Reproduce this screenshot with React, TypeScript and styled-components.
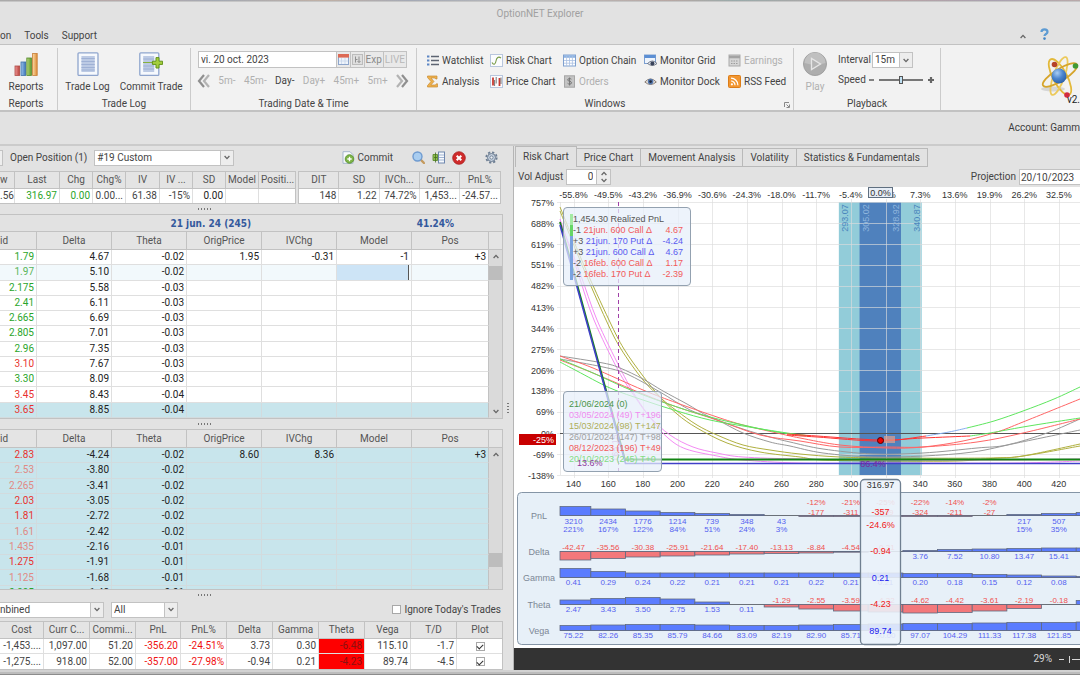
import React from "react";
import styled, { createGlobalStyle, css } from "styled-components";

const c = {
  face: "#e2e2e2",
  ribbon: "#f2f2f2",
  line: "#c2c2c2",
  cell: "#dfdfdf",
  text: "#444",
  off: "#b0b0b0",
  dark: "#222",
  green: "#2aa52a",
  red: "#e8322e",
  softRed: "#e08a84",
  blueRow: "#c8e5ec",
};

const Global = createGlobalStyle`
  * { box-sizing: border-box; }
  body {
    margin: 0;
    background: ${c.face};
    color: ${c.text};
    font: 10px/14px Roboto, "Noto Sans", sans-serif;
    overflow-x: hidden;
  }
  button, input, select { font: inherit; color: inherit; margin: 0; }
  button { background: none; border: 0; padding: 0; }
`;

const Shell = styled.div`
  display: flex;
  flex-direction: column;
  overflow: hidden;
`;
const Backdrop = styled.div`
  height: 2px;
  border-bottom: 1px solid #c6c6c6;
  background: linear-gradient(90deg, #aaa, #b9a9a9 12%, #a3a9b3 20%, #c0b0a5 30%, #a4a9b5 38%, #bbb 50%, #b7a7a3 62%, #9aa 68%, #b9a4a4 82%, #a9a1b0 92%, #b9a9a9);
`;
const TitleBar = styled.header`
  padding: 5px 0 7px;
  text-align: center;
  color: #a0a0a0;
`;
const MenuBar = styled.nav`
  display: flex;
  align-items: center;
  gap: 13px;
  height: 15px;
  margin-bottom: 1px;
`;
const MenuEnd = styled.div`
  display: flex;
  align-items: center;
  gap: 14px;
  margin-left: auto;
  padding-right: 31px;
`;

/* Ribbon */
const Ribbon = styled.section`
  display: flex;
  height: 68px;
  padding-top: 3px;
  background: ${c.ribbon};
  border-top: 1px solid ${c.line};
  border-bottom: 2px solid ${c.line};
`;
const Group = styled.div<{ $w: number; $shift?: number }>`
  position: relative;
  flex: 0 0 ${(p) => p.$w}px;
  min-width: 0;
  display: flex;
  flex-direction: column;
  padding-right: ${(p) => p.$shift ?? 0}px;
  border-right: 1px solid #cbcbcb;
`;
const Caption = styled.div`
  margin-top: auto;
  text-align: center;
  line-height: 12px;
`;
const BigButtons = styled.div`
  display: flex;
  justify-content: center;
  gap: 10px;
`;
const BigButton = styled.button`
  display: flex;
  flex-direction: column;
  align-items: center;
  gap: 4px;
  padding-top: 4px;
  white-space: nowrap;
  &:disabled { color: ${c.off}; }
`;
const DateField = styled.div`
  display: flex;
  height: 17px;
  margin: 3px 9px 0 7px;
  border: 1px solid ${c.line};
  input { flex: 1; min-width: 0; border: 0; padding: 0 2px; background: #fff; }
`;
const DateButton = styled.button`
  display: grid;
  place-items: center;
  min-width: 13px;
  padding: 0 1px;
  border-left: 1px solid ${c.line};
  background: #e9e9e9;
  color: #8a8a8a;
  &:disabled { color: #b8b8b8; }
`;
const Steps = styled.div`
  display: flex;
  align-items: center;
  justify-content: space-between;
  margin: 6px 7px 0 6px;
  height: 14px;
`;
const Step = styled.button`
  display: flex;
  &:disabled { color: ${c.off}; }
`;
const Commands = styled.div`
  display: grid;
  grid-template-columns: 64px 73px 81px 84px 1fr;
  grid-template-rows: 21px 21px;
  padding: 2px 0 0 9px;
`;
const Command = styled.button`
  display: flex;
  align-items: center;
  gap: 3px;
  white-space: nowrap;
  svg { flex: none; }
  &:disabled { color: ${c.off}; }
`;
const Launcher = styled.button`
  position: absolute;
  right: 3px;
  bottom: 2px;
  display: flex;
`;
const Playback = styled.div`
  display: flex;
  gap: 11px;
  padding-left: 9px;
`;
const PlayOptions = styled.div`
  display: flex;
  flex-direction: column;
  gap: 4px;
  padding-top: 4px;
`;
const Field = styled.label`
  display: flex;
  align-items: center;
  gap: 1px;
  height: 16px;
`;
const SpeedRange = styled.input`
  appearance: none;
  width: 44px;
  height: 8px;
  margin: 0 3px;
  background: linear-gradient(#777, #777) center / 100% 2px no-repeat;
  &::-webkit-slider-thumb {
    appearance: none;
    width: 4px;
    height: 8px;
    border: 1px solid #555;
    background: #bfe0f2;
  }
`;
const Brand = styled.div`
  position: relative;
  flex: 1;
  display: flex;
  justify-content: flex-end;
  padding-top: 7px;
  overflow: hidden;
  span { position: absolute; right: 0; bottom: 3px; color: #222; }
`;
const AccountBar = styled.div`
  display: flex;
  justify-content: flex-end;
  align-items: center;
  height: 32px;
  color: #3c3c3c;
`;

/* Panes */
const Workspace = styled.main`
  display: grid;
  grid-template-columns: 47.5% minmax(0, 1fr);
  border-top: 2px solid #cbcbcb;
`;
const LeftPane = styled.section`
  display: grid;
  grid-template-columns: minmax(0, 1fr) 10px;
`;
const LeftStack = styled.div`
  display: flex;
  flex-direction: column;
  min-width: 0;
`;
const GripRow = styled.div<{ $vertical?: boolean }>`
  display: grid;
  place-items: center;
  ${(p) => (p.$vertical ? "" : "height: 10px; margin-right: 94px;")}
  &::after {
    content: "";
    ${(p) =>
      p.$vertical
        ? css`width: 2px; height: 10px; background: repeating-linear-gradient(#777 0 1px, transparent 1px 3px);`
        : css`width: 13px; height: 2px; background: repeating-linear-gradient(90deg, #777 0 1px, transparent 1px 3px);`}
  }
`;
const Toolbar = styled.div<{ $h: number }>`
  display: flex;
  align-items: center;
  height: ${(p) => p.$h}px;
  gap: 7px;
  padding: 0 5px 2px 0;
`;
const Spring = styled.div`
  flex: 1;
`;
const IconButton = styled.button<{ $gap?: number }>`
  display: flex;
  align-items: center;
  gap: 3px;
  margin-left: ${(p) => p.$gap ?? 0}px;
`;
const ComboEdge = styled.div`
  width: 3px;
  height: 16px;
  border: 1px solid ${c.line};
  border-left: 0;
  background: #eee;
`;
const SelectBox = styled.span<{ $w: number; $open?: boolean }>`
  display: flex;
  flex: none;
  width: ${(p) => p.$w}px;
  height: 16px;
  border: 1px solid ${c.line};
  ${(p) => p.$open && "border-left: 0;"}
  background: #fff;
  select {
    flex: 1;
    min-width: 0;
    appearance: none;
    border: 0;
    padding: 0 ${(p) => (p.$open ? 0 : 2)}px;
    background: #fff;
    line-height: 14px;
  }
  span {
    display: grid;
    place-items: center;
    width: 13px;
    border-left: 1px solid ${c.line};
    background: #ededed;
    pointer-events: none;
  }
`;

/* Tables */
const Table = styled.table`
  width: 100%;
  table-layout: fixed;
  border-collapse: separate;
  border-spacing: 0;
  color: ${c.dark};
  th {
    height: 17px;
    padding: 0 2px;
    font-weight: 400;
    line-height: 14px;
    color: #555;
    background: #e4e4e4;
    border-right: 1px solid ${c.line};
    border-bottom: 1px solid ${c.line};
    white-space: nowrap;
    overflow: hidden;
  }
  td {
    height: 15px;
    padding: 0 2px;
    text-align: right;
    line-height: 14px;
    white-space: nowrap;
    overflow: hidden;
    background: #fff;
    border-right: 1px solid ${c.cell};
    border-bottom: 1px solid ${c.cell};
  }
  tr > :last-child { border-right: 0; }
`;
const Frame = styled.div<{ $open?: boolean; $grow?: number }>`
  ${(p) => p.$grow && `flex: ${p.$grow} 1 0;`}
  min-width: 0;
  border: 1px solid ${c.line};
  ${(p) => p.$open && "border-left: 0;"}
  overflow: hidden;
`;
const SummaryRow = styled.div`
  display: flex;
  gap: 2px;
  padding-right: 2px;
  tbody tr:last-child td { border-bottom: 0; height: 14px; }
`;
const Cell = styled.td<{ $color?: string; $bg?: string; $tight?: boolean }>`
  && {
    ${(p) => p.$color && `color: ${p.$color};`}
    ${(p) => p.$bg && `background: ${p.$bg};`}
    ${(p) => p.$tight && "padding: 0;"}
  }
`;
const EdgeHead = styled.th`
  && { padding: 0; text-align: left; }
`;
const ChainTitle = styled.h2`
  display: flex;
  margin: 0;
  height: 17px;
  border-bottom: 1px solid ${c.line};
  font: 700 10px/18px "DejaVu Sans Condensed", "DejaVu Sans", sans-serif;
  color: #34599d;
  span { flex: 0 0 83%; padding-left: 5px; text-align: center; }
`;
const ChainBody = styled.div<{ $h: number }>`
  display: grid;
  grid-template-columns: minmax(0, 1fr) 13px;
  height: ${(p) => p.$h}px;
  overflow: hidden;
`;
const ChainTable = styled(Table)<{ $fill: number; $tinted?: boolean }>`
  height: ${(p) => p.$fill}px;
  th { height: 18px; }
  td { background: ${(p) => (p.$tinted ? c.blueRow : "#fff")}; border-color: ${(p) => (p.$tinted ? "#d2dbde" : c.cell)}; }
  tr > :last-child { border-right: 1px solid ${c.line}; }
`;
const ChainRow = styled.tr<{ $state?: "selected" | "tinted" }>`
  ${(p) => p.$state === "selected" && css`td { background: #f2f9fc; }`}
  ${(p) => p.$state === "tinted" && css`td { background: ${c.blueRow}; border-color: #d2dbde; }`}
`;
const EditCell = styled.td`
  && { background: #cde4f6; box-shadow: inset -2px 0 0 #f2f9fc, inset -3px 0 0 #555; }
`;
const ScrollColumn = styled.div`
  display: flex;
  flex-direction: column;
  align-items: stretch;
  min-height: 0;
  background: #dadada;
  svg { margin: 4px auto; flex: none; }
`;
const ScrollHead = styled.div`
  flex: 0 0 18px;
  background: #e4e4e4;
  border-bottom: 1px solid ${c.line};
`;
const Track = styled.div<{ $grow: number }>`
  flex: ${(p) => p.$grow} 1 0;
`;
const Thumb = styled.div`
  flex: 0 0 14px;
  background: #bdbdbd;
`;
const CheckLabel = styled.label`
  display: flex;
  align-items: center;
  gap: 3px;
  margin-right: -3px;
`;
const Check = styled.input`
  appearance: none;
  width: 9px;
  height: 9px;
  border: 1px solid #a8a8a8;
  background: #fff;
  display: inline-grid;
  place-items: center;
  vertical-align: middle;
  &:checked::after {
    content: "";
    width: 5px;
    height: 3px;
    border: solid #333;
    border-width: 0 0 1px 1px;
    transform: rotate(-45deg);
  }
`;
const PositionTable = styled(Table)`
  td { color: #444; }
  td:last-child { text-align: center; line-height: 10px; }
  tbody tr:last-child td { border-bottom: 0; }
`;

/* Chart pane */
const ChartPane = styled.section`
  display: flex;
  flex-direction: column;
  min-width: 0;
  border-left: 1px solid #b5b5b5;
  overflow: hidden;
`;
const Tabs = styled.div`
  display: flex;
  align-items: flex-end;
  height: 21px;
  padding-left: 1px;
`;
const Tab = styled.button<{ $active?: boolean }>`
  height: ${(p) => (p.$active ? 21 : 19)}px;
  padding: 0 7px;
  border: 1px solid #b9b9b9;
  border-left-width: ${(p) => (p.$active ? 1 : 0)}px;
  border-bottom-width: ${(p) => (p.$active ? 0 : 1)}px;
  white-space: nowrap;
`;
const ChartOptions = styled.div`
  display: flex;
  align-items: center;
  height: 20px;
  padding-left: 4px;
`;
const Spinner = styled.span`
  display: flex;
  width: 45px;
  height: 16px;
  margin-left: 3px;
  border: 1px solid ${c.line};
  background: #fff;
  input { flex: 1; min-width: 0; border: 0; padding: 0 3px; text-align: right; background: #fff; }
  span { display: grid; place-items: center; width: 14px; border-left: 1px solid ${c.line}; background: #ededed; }
`;
const Projection = styled.input`
  width: 61px;
  height: 16px;
  margin-left: 3px;
  padding: 0 1px;
  border: 1px solid ${c.line};
  border-right: 0;
  background: #fff;
`;
const chartFont = `"Liberation Sans", Arial, sans-serif`;
const ChartArea = styled.div`
  position: relative;
  height: 461px;
  background: #fff;
  overflow: hidden;
  svg { display: block; }
`;
const LegendBox = styled.ul<{ $top: number; $w: number; $pad: string }>`
  position: absolute;
  top: ${(p) => p.$top}px;
  left: 49px;
  width: ${(p) => p.$w}px;
  margin: 0;
  padding: ${(p) => p.$pad};
  list-style: none;
  font: 9px/11px ${chartFont};
  background: rgba(230, 238, 249, 0.72);
  border: 1px solid #93a1b0;
  border-radius: 4px;
`;
const LegendRow = styled.li<{ $color: string; $bar?: string }>`
  display: flex;
  color: ${(p) => p.$color};
  white-space: pre;
  ${(p) => p.$bar && `border-left: 3px solid ${p.$bar};`}
  b { font-weight: 400; color: #555; }
  i { font-style: normal; margin-left: auto; padding-right: 1px; }
`;
const ProbabilityMark = styled.span`
  position: absolute;
  top: 271px;
  left: 63px;
  font: 9px/11px ${chartFont};
  color: #8f3a9a;
`;
const StatusBar = styled.footer`
  flex: 1;
  display: flex;
  align-items: center;
  justify-content: flex-end;
  gap: 7px;
  min-height: 21px;
  background: #333;
  color: #d8d8d8;
`;
const WindowEdge = styled.div`
  height: 5px;
  border-top: 2px solid #d2d2d2;
  border-bottom: 1px solid #8c8c8c;
  background: #bcbcbc;
`;

/* Icons */
const Chevron = ({ up = false }: { up?: boolean }) => (
  <svg width="6" height="5" viewBox="0 0 6 5" fill="none" stroke="#666" strokeWidth="1.3">
    <path d={up ? "M.6 4L3 1.4 5.4 4" : "M.6 1L3 3.6 5.4 1"} />
  </svg>
);
const ReportsIcon = () => (
  <svg width="24" height="24" viewBox="0 0 24 24">
    <defs>
      <linearGradient id="rr"><stop stopColor="#e99" /><stop offset="1" stopColor="#b9413a" /></linearGradient>
      <linearGradient id="rb"><stop stopColor="#9cc4ec" /><stop offset="1" stopColor="#3d76b8" /></linearGradient>
      <linearGradient id="rg"><stop stopColor="#b5d67c" /><stop offset="1" stopColor="#5f9a2c" /></linearGradient>
      <linearGradient id="ro"><stop stopColor="#fbd9a4" /><stop offset="1" stopColor="#dd8b35" /></linearGradient>
    </defs>
    <rect x="1" y="14" width="4.6" height="9.4" fill="url(#rr)" stroke="#ae4a45" strokeWidth=".8" />
    <rect x="7" y="10" width="4.6" height="13.4" fill="url(#rb)" stroke="#3c6fa8" strokeWidth=".8" />
    <rect x="12.8" y="6" width="4.6" height="17.4" fill="url(#rg)" stroke="#54882b" strokeWidth=".8" />
    <rect x="18.6" y="1.5" width="4.6" height="21.9" fill="url(#ro)" stroke="#c67d35" strokeWidth=".8" />
  </svg>
);
const LogIcon = ({ plus = false }: { plus?: boolean }) => (
  <svg width="24" height="24" viewBox="0 0 24 24">
    <rect x={plus ? 0.8 : 2} y=".8" width={plus ? 19 : 20} height="22.6" rx="1" fill="#f6f9fd" stroke="#8fa5cd" strokeWidth="1.3" />
    <rect x={plus ? 4.2 : 5.4} y="4" width={plus ? 11 : 13.4} height="16" fill="#bccae4" />
    <path d={plus ? "M4.2 7h11M4.2 14h11M4.2 17h11" : "M5.4 6.5h13.4M5.4 9.5h13.4M5.4 12.5h13.4M5.4 15.5h13.4M5.4 18h13.4"} stroke="#98abd0" strokeWidth=".8" />
    {plus && (
      <>
        <path d="M4 10.5h10" stroke="#86b13d" strokeWidth="1" />
        <path d="M17 5.6h3v3.6h3.6v3.2H20V16h-3v-3.6h-3.6V9.200H17z" fill="#a4cf3d" stroke="#63921d" strokeWidth="1" />
      </>
    )}
  </svg>
);
const CalendarIcon = () => (
  <svg width="11" height="11" viewBox="0 0 11 11">
    <rect x=".5" y=".5" width="10" height="10" fill="#eef4fb" stroke="#8ea6cc" />
    <rect x="0" y="0" width="11" height="3.600" fill="#dd6a55" />
    <path d="M3.500 4v6M7 4v6M1 7h9" stroke="#c3d1e8" strokeWidth=".7" />
  </svg>
);
const SwapIcon = () => (
  <svg width="11" height="11" viewBox="0 0 11 11" fill="none" stroke="#909090">
    <rect x=".5" y=".5" width="10" height="10" stroke="#bcbcbc" fill="#dedede" />
    <path d="M3.500 2.500v6M3.500 5.500h2M7 2.500v6M5.500 7L7 8.500 8.500 7" />
  </svg>
);
const DoubleChevron = ({ right = false }: { right?: boolean }) => (
  <svg width="13" height="14" viewBox="0 0 13 14" fill="none" strokeWidth="2.200">
    <path d={right ? "M6 1l5 6-5 6" : "M7 1L2 7l5 6"} stroke="#8f8f8f" />
    <path d={right ? "M1 1l5 6-5 6" : "M12 1L7 7l5 6"} stroke="#b3b3b3" />
  </svg>
);
const Small = ({ children }: { children: React.ReactNode }) => (
  <svg width="13" height="13" viewBox="0 0 13 13">{children}</svg>
);
const icons = {
  watchlist: (
    <Small>
      <path d="M5 2.500h8M5 6.500h8M5 10.500h8" stroke="#5d6472" strokeWidth="1.300" />
      <path d="M1 2.500h2.400M1 6.500h2.400M1 10.500h2.400" stroke="#5d86c4" strokeWidth="2.200" />
    </Small>
  ),
  analysis: (
    <Small>
      <path d="M1.500 1h9.500v3H9.800L9 3H5l3 3.500L4.800 10H9.500l.8-1.200h1.200V12H1.500v-1.400L5 6.500 1.500 2.500z" fill="#edb04c" stroke="#c98d35" strokeWidth=".7" />
    </Small>
  ),
  risk: (
    <Small>
      <rect x=".5" y=".5" width="12" height="12" fill="#fbfcfe" stroke="#b8c6dd" />
      <path d="M2 8.500c1.500 3 3.500 2 4-1.500S8.500 2 11 4" fill="none" stroke="#789b46" strokeWidth="1.100" />
    </Small>
  ),
  price: (
    <Small>
      <rect x=".5" y=".5" width="12" height="12" fill="#fbfcfe" stroke="#b8c6dd" />
      <path d="M3 2.500v8M9.500 3v8" stroke="#c93b32" strokeWidth="1.800" />
      <path d="M6.200 2v6.500M11 2.500V9M4.600 5v6" stroke="#555" strokeWidth=".8" />
    </Small>
  ),
  chain: (
    <Small>
      <rect x=".5" y="1" width="12" height="11" fill="#fff" stroke="#7fa0cf" />
      <rect x="1" y="1.200" width="11" height="2.600" fill="#8fb4e2" />
      <path d="M3.600 2v10M6.500 2v10M9.400 2v10M1 6.500h11M1 9.200h11" stroke="#a9c0e2" strokeWidth=".8" />
    </Small>
  ),
  orders: (
    <Small>
      <rect x="1.500" y=".8" width="10" height="11.400" fill="#c4c4c4" stroke="#a6a6a6" />
      <path d="M8.400 4.200c-1-1-3.700-.9-3.700.7 0 1.800 3.900 1 3.900 2.900 0 1.600-3 1.700-4 .5M6.600 2.500v8" fill="none" stroke="#777" strokeWidth="1" />
    </Small>
  ),
  grid: (
    <Small>
      <rect x=".5" y="1" width="11" height="8.500" fill="#eef4fc" stroke="#7c9fd0" />
      <rect x=".5" y="1" width="11" height="3" fill="#5c8fd4" />
      <path d="M3.500 9.500Q8.500 4.500 13 9.500 8.500 13.500 3.500 9.500z" fill="#dfe4ec" stroke="#5a6273" strokeWidth=".8" />
      <circle cx="8.400" cy="9.400" r="2" fill="#39435a" />
    </Small>
  ),
  dock: (
    <Small>
      <path d="M.8 7Q6.500.8 12.300 7 6.500 12 .8 7z" fill="#e8e4df" stroke="#8a7e74" strokeWidth="1" />
      <circle cx="6.600" cy="6.600" r="2.800" fill="#5377ad" />
      <circle cx="6.600" cy="6.600" r="1.300" fill="#20283a" />
    </Small>
  ),
  earnings: (
    <Small>
      <rect x="1" y="1" width="11" height="11" fill="#d6d6d6" stroke="#aaa" />
      <path d="M1 3h11" stroke="#a3a3a3" strokeWidth="2.600" />
      <path d="M3 7h7.500M3 9.500h7.500" stroke="#9c9c9c" strokeDasharray="1.500 1" />
    </Small>
  ),
  rss: (
    <Small>
      <rect x=".5" y=".5" width="12" height="12" rx="1" fill="#f29630" stroke="#dc7d18" />
      <circle cx="3.900" cy="9.300" r="1.100" fill="#fff" />
      <path d="M3 6a4 4 0 0 1 4 4.200M3 3.200a7 7 0 0 1 6.900 7" fill="none" stroke="#fff" strokeWidth="1.200" />
    </Small>
  ),
};
const PlayIcon = () => (
  <svg width="24" height="24" viewBox="0 0 24 24">
    <circle cx="12" cy="12" r="11.500" fill="#adadad" stroke="#a0a0a0" />
    <path d="M1.500 11a10.500 10.500 0 0 1 21 0q-10 3-21 0z" fill="#c0c0c0" />
    <path d="M8.500 6.500v11l9-5.500z" fill="#b5b5b5" stroke="#e6e6e6" strokeWidth="1.300" />
  </svg>
);
const AtomLogo = () => (
  <svg width="40" height="48" viewBox="0 0 40 48">
    <defs>
      <radialGradient id="core" cx=".38" cy=".3" r=".75"><stop stopColor="#a9cdf3" /><stop offset=".5" stopColor="#4d86cf" /><stop offset="1" stopColor="#285da6" /></radialGradient>
    </defs>
    <ellipse cx="13" cy="34" rx="12" ry="2.500" fill="#d6d6d6" />
    <g fill="none" strokeWidth="1.800">
      <ellipse cx="20" cy="22" rx="7" ry="20" transform="rotate(-28 20 22)" stroke="#e3b93a" />
      <ellipse cx="19" cy="21" rx="5.500" ry="20" transform="rotate(20 19 21)" stroke="#ecca5c" />
      <ellipse cx="20" cy="20" rx="20" ry="6" transform="rotate(-32 20 20)" stroke="#d6a52c" />
    </g>
    <circle cx="19" cy="21" r="7.500" fill="url(#core)" />
    <circle cx="14.500" cy="9.500" r="2.800" fill="#b5432a" />
    <circle cx="35.500" cy="11" r="2.800" fill="#3f9a34" />
    <circle cx="27" cy="40" r="2.800" fill="#d22b3f" />
  </svg>
);
const CommitIcon = () => (
  <Small>
    <path d="M1 .7h7l3 3v8.600H1z" fill="#f7f9fc" stroke="#9fb0c9" strokeWidth=".9" />
    <circle cx="7.500" cy="8" r="4.300" fill="#7db446" stroke="#548a2a" strokeWidth=".8" />
    <path d="M7.500 5.800v4.400M5.300 8h4.400" stroke="#fff" strokeWidth="1.300" />
  </Small>
);
const SearchIcon = () => (
  <Small>
    <path d="M8.500 8.500l3.500 3.500" stroke="#c49a5e" strokeWidth="2.400" strokeLinecap="round" />
    <circle cx="5.500" cy="5.500" r="4.500" fill="#a9cdf0" stroke="#6f9bd0" strokeWidth="1.400" />
  </Small>
);
const ColumnsIcon = () => (
  <Small>
    <rect x="6.500" y="1" width="6" height="11" fill="#f7fafd" stroke="#6f87ae" />
    <path d="M7 4h5M7 6.500h5M7 9h5" stroke="#8aa2c8" strokeWidth=".8" />
    <path d="M1 3.500h4.500v6H1z" fill="#8fbf51" stroke="#5d8d2c" strokeWidth=".9" />
    <path d="M3.500 1.500v10M2 6.500h3" stroke="#456f20" strokeWidth=".8" />
  </Small>
);
const CloseIcon = () => (
  <svg width="14" height="14" viewBox="0 0 14 14">
    <circle cx="7" cy="7" r="6.300" fill="#cf2b2b" stroke="#a82222" strokeWidth=".8" />
    <path d="M4.700 4.700l4.600 4.600M9.300 4.700L4.700 9.300" stroke="#fff" strokeWidth="2" />
  </svg>
);
const GearIcon = () => (
  <Small>
    <circle cx="6.500" cy="6.500" r="5.200" fill="none" stroke="#6c7d92" strokeWidth="1.800" strokeDasharray="2.200 1.880" />
    <circle cx="6.500" cy="6.500" r="4" fill="#c3cfdd" stroke="#6c7d92" />
    <circle cx="6.500" cy="6.500" r="1.600" fill="#eef2f6" stroke="#6c7d92" strokeWidth=".9" />
  </Small>
);

/* Data */
type ChainEntry = [bid: string, tone: string, delta: string, theta: string, orig?: string, ivChg?: string, model?: string, pos?: string];
const g = c.green, r = c.red, s = c.softRed;
const calls: ChainEntry[] = [
  ["1.79", g, "4.67", "-0.02", "1.95", "-0.31", "-1", "+3"],
  ["1.97", "#5ab55a", "5.10", "-0.02"],
  ["2.175", g, "5.58", "-0.03"],
  ["2.41", g, "6.11", "-0.03"],
  ["2.665", g, "6.69", "-0.03"],
  ["2.805", g, "7.01", "-0.03"],
  ["2.96", g, "7.35", "-0.03"],
  ["3.10", r, "7.67", "-0.03"],
  ["3.30", g, "8.09", "-0.03"],
  ["3.45", r, "8.43", "-0.04"],
  ["3.65", r, "8.85", "-0.04"],
];
const puts: ChainEntry[] = [
  ["2.83", r, "-4.24", "-0.02", "8.60", "8.36", "", "+3"],
  ["2.53", s, "-3.80", "-0.02"],
  ["2.265", s, "-3.41", "-0.02"],
  ["2.03", r, "-3.05", "-0.02"],
  ["1.81", r, "-2.72", "-0.02"],
  ["1.61", s, "-2.42", "-0.02"],
  ["1.435", s, "-2.16", "-0.01"],
  ["1.275", r, "-1.91", "-0.01"],
  ["1.125", s, "-1.68", "-0.01"],
  ["0.995", g, "-1.48", "-0.01"],
];
const positions = [
  ["-1,453....", "1,097.00", "51.20", "-356.20", "-24.51%", "3.73", "0.30", "-6.48", "115.10", "-1.7"],
  ["-1,275....", "918.00", "52.00", "-357.00", "-27.98%", "-0.94", "0.21", "-4.23", "89.74", "-4.5"],
];

const Cols = ({ widths }: { widths: number[] }) => (
  <colgroup>{widths.map((w, i) => <col key={i} width={w} />)}</colgroup>
);

function Chain({ rows, height, fill, tinted, before, after }: { rows: ChainEntry[]; height: number; fill: number; tinted?: boolean; before: number; after: number }) {
  return (
    <ChainBody $h={height}>
      <ChainTable $fill={fill} $tinted={tinted}>
        <Cols widths={[37, 75, 75, 75, 75, 75, 77]} />
        <thead>
          <tr>
            <EdgeHead>id</EdgeHead>
            {["Delta", "Theta", "OrigPrice", "IVChg", "Model", "Pos"].map((h) => <th key={h}>{h}</th>)}
          </tr>
        </thead>
        <tbody>
          {rows.map(([bid, tone, delta, theta, orig, iv, model, pos], i) => {
            const state = !tinted && i === 1 ? "selected" : !tinted && i === 10 ? "tinted" : undefined;
            return (
              <ChainRow key={i} $state={state}>
                <Cell $color={tone}>{bid}</Cell>
                <td>{delta}</td>
                <td>{theta}</td>
                <td>{orig}</td>
                <td>{iv}</td>
                {state === "selected" ? <EditCell /> : <td>{model}</td>}
                <td>{pos}</td>
              </ChainRow>
            );
          })}
        </tbody>
      </ChainTable>
      <ScrollColumn>
        <ScrollHead />
        <Chevron up />
        <Track $grow={before} />
        <Thumb />
        <Track $grow={after} />
        <Chevron />
      </ScrollColumn>
    </ChainBody>
  );
}

/* Risk chart scales: price to x, percent to y */
const px = (price: number) => 59.5 + (price - 140) * 1.7335;
const py = (pct: number) => 246 - pct * 0.305;
const prices = Array.from({ length: 16 }, (_, i) => 140 + i * 20);
const topLabels = ["-55.8%", "-49.5%", "-43.2%", "-36.9%", "-30.6%", "-24.3%", "-18.0%", "-11.7%", "-5.4%", "1.0%", "7.3%", "13.6%", "19.9%", "26.2%", "32.5%", "38.8%"];
const levels = [757, 688, 619, 551, 482, 413, 344, 275, 206, 138, 69, 0, -69, -138];

type Pt = [number, number];
const smooth = (pts: Pt[]) => {
  let d = `M${pts[0][0]} ${pts[0][1]}`;
  for (let i = 0; i < pts.length - 1; i++) {
    const a = pts[Math.max(0, i - 1)], b = pts[i], e = pts[i + 1], f = pts[Math.min(pts.length - 1, i + 2)];
    d += `C${b[0] + (e[0] - a[0]) / 6} ${b[1] + (e[1] - a[1]) / 6} ${e[0] - (f[0] - b[0]) / 6} ${e[1] - (f[1] - b[1]) / 6} ${e[0]} ${e[1]}`;
  }
  return d;
};
const curves: { color: string; pts: Pt[] }[] = [
  { color: "#b0b040", pts: [[46, 24], [68, 78], [92, 133], [107, 162], [129, 193], [148, 212], [163, 224], [183, 238], [203, 248], [229, 258], [256, 263], [286, 267], [326, 270], [376, 271], [476, 271], [509, 269], [566, 259]] },
  { color: "#b0b040", pts: [[46, 20], [69, 76], [95, 133], [110, 162], [129, 189], [146, 210], [163, 227], [183, 241], [213, 256], [246, 265], [286, 270], [309, 273], [376, 274], [443, 274], [483, 271], [509, 269], [566, 257]] },
  { color: "#f48bf4", pts: [[46, 32], [64, 86], [80, 133], [104, 183], [121, 210], [136, 230], [156, 248], [179, 260], [203, 266], [229, 270], [286, 272], [376, 273], [490, 273], [566, 272]] },
  { color: "#f48bf4", pts: [[46, 34], [66, 86], [83, 133], [106, 181], [122, 210], [138, 233], [154, 251], [172, 262], [203, 269], [229, 273], [286, 276], [376, 276], [500, 276], [566, 274]] },
  { color: "#999", pts: [[46, 169], [89, 176], [106, 181], [129, 192], [149, 204], [173, 217], [196, 230], [229, 242], [256, 250], [276, 255], [309, 262], [359, 267], [409, 266], [463, 261], [493, 258], [533, 246], [566, 232]] },
  { color: "#999", pts: [[46, 172], [89, 180], [113, 187], [146, 205], [176, 223], [203, 233], [229, 246], [256, 255], [276, 259], [309, 266], [359, 270], [409, 269], [459, 265], [503, 256], [566, 243]] },
  { color: "#f66", pts: [[46, 169], [79, 181], [129, 203], [163, 216], [203, 230], [229, 238], [263, 246], [286, 251], [326, 258], [373, 261], [409, 260], [449, 254], [483, 245], [509, 235], [566, 212]] },
  { color: "#f66", pts: [[46, 173], [79, 186], [129, 207], [163, 220], [203, 233], [246, 248], [286, 254], [326, 260], [373, 260], [409, 260], [463, 255], [509, 246], [566, 232]] },
  { color: "#5ee65e", pts: [[46, 172], [79, 186], [119, 204], [163, 220], [196, 230], [229, 238], [263, 245], [296, 249]] },
  { color: "#5ee65e", pts: [[46, 175], [63, 184], [96, 201], [129, 213], [163, 224], [196, 233], [229, 239], [273, 246], [296, 249]] },
  { color: "#f33", pts: [[273, 248], [303, 250], [366, 254], [412, 249]] },
  { color: "#f33", pts: [[273, 247], [303, 249], [366, 253], [409, 251], [456, 249]] },
  { color: "#86aef0", pts: [[412, 249], [435, 245], [453, 241]] },
  { color: "#5ee65e", pts: [[453, 241], [480, 234], [509, 224], [540, 212], [566, 200]] },
  { color: "#5ee65e", pts: [[456, 249], [476, 246], [509, 240], [540, 235], [566, 231]] },
];

/* Greek histogram: bar height is up (+) or down (-) from each row's baseline */
const greekRows = [
  { name: "PnL", base: 328, posY: 334, negY: 325, bars: [9, 6.5, 4.5, 3, 2, 1, 0, -1, -1, -1, -1, -1, 0, 1, 2, 3],
    text: ["3210", "2434", "1776", "1214", "739", "348", "43", "-177", "-311", "-359", "-324", "-211", "-27", "217", "507", "813"],
    sub: ["221%", "167%", "122%", "84%", "51%", "24%", "3%", "-12%", "-21%", "-25%", "-22%", "-14%", "-2%", "15%", "35%", "56%"] },
  { name: "Delta", base: 364, posY: 369, negY: 360, bars: [-8.5, -7, -5.5, -4.5, -3.5, -2.5, -2, -1.5, -0.7, 0, 1, 2, 2.5, 3, 3.5, 3.5],
    text: ["-42.47", "-35.56", "-30.38", "-25.91", "-21.64", "-17.40", "-13.13", "-8.84", "-4.54", "-0.31", "3.76", "7.52", "10.80", "13.47", "15.41", "16.70"] },
  { name: "Gamma", base: 390, posY: 395, negY: 386, bars: [9, 6, 4.5, 4.5, 4.5, 4.5, 4.5, 4.5, 4.5, 4.5, 4, 4, 3, 2.5, 1.5, 1],
    text: ["0.41", "0.29", "0.24", "0.22", "0.21", "0.21", "0.21", "0.22", "0.21", "0.21", "0.20", "0.18", "0.15", "0.12", "0.08", "0.05"] },
  { name: "Theta", base: 417, posY: 422, negY: 413, bars: [4.5, 6, 7, 5.5, 2.5, 0, -2.5, -4.5, -6.5, -7.5, -8.5, -8, -6.5, -4, 0, 4],
    text: ["2.47", "3.43", "3.50", "2.75", "1.53", "0.11", "-1.29", "-2.55", "-3.59", "-4.32", "-4.62", "-4.42", "-3.61", "-2.19", "-0.18", "2.10"] },
  { name: "Vega", base: 443, posY: 448, negY: 439, bars: [5, 5.5, 6, 6, 5.5, 5, 5, 5.5, 6, 6.5, 7, 7, 7.5, 8, 8, 8.5],
    text: ["75.22", "82.26", "85.35", "85.79", "84.66", "83.09", "82.19", "82.90", "85.71", "90.60", "97.07", "104.29", "111.33", "117.38", "121.85", "124.6"] },
];

const ChartSvg = styled.svg`
  font: 9px ${chartFont};
  fill: #333;
  text { dominant-baseline: central; text-anchor: middle; }
  .end { text-anchor: end; }
`;
const GreekValue = styled.text`
  font-size: 8px;
`;

function RiskChart() {
  return (
    <ChartSvg width="100%" height="461" role="img" aria-label="Risk chart">
      <rect x={px(293.07)} y="15" width={px(340.87) - px(293.07)} height="273" fill="#92ccd9" />
      <rect x={px(305.02)} y="15" width={px(328.92) - px(305.02)} height="273" fill="#4f81bd" />
      <g stroke="#dcdcdc" strokeOpacity=".65">
        {levels.map((l) => <path key={l} d={`M43 ${Math.round(py(l)) + 0.5}H600`} />)}
        {prices.map((p) => <path key={p} d={`M${Math.round(px(p)) + 0.5} 12V291`} />)}
        <path d="M46.500 15V288" />
      </g>
      {levels.map((l) => <text key={l} className="end" x="40" y={py(l) + 0.5}>{l}%</text>)}
      {prices.map((p, i) => (
        <g key={p}>
          <text x={px(p)} y="8">{topLabels[i]}</text>
          {p !== 320 && <text x={px(p)} y="297">{p}</text>}
        </g>
      ))}
      {([[293.07, 6, "#4a86bd"], [305.02, 6, "#8fb6dd"], [328.92, -5, "#8fb6dd"], [340.87, -5, "#4a86bd"]] as [number, number, string][]).map(([p, o, f]) => (
        <text key={p} fill={f} transform={`translate(${px(p) + o} 31) rotate(-90)`}>{p.toFixed(2)}</text>
      ))}
      <path d="M46 246.500H600" stroke="#555" />
      <g fill="none">
        {curves.map((k, i) => <path key={i} d={smooth(k.pts)} stroke={k.color} />)}
        <path d="M46 35L111 272.500H600" stroke="#138413" strokeWidth="1.800" />
        <path d="M46 38L111.500 276.500H600" stroke="#4040c8" strokeWidth="1.600" />
        <path d="M104.500 15V288" stroke="#a040a8" strokeDasharray="4 3" />
      </g>
      <text fill="#c48bd0" transform="translate(101 261) rotate(-90)">165.15</text>
      <text fill="#7a2a9c" x="359" y="277">86.4%</text>
      <rect x="370" y="249" width="11" height="7" fill="#e6a08c" fillOpacity=".7" />
      <circle cx="366.500" cy="253.500" r="3" fill="#e00" stroke="#500" />
      <rect x="354.500" y=".5" width="24" height="10" fill="#e6edf6" stroke="#5f6f80" />
      <text x="366.500" y="6">0.0%</text>
      <rect x="5" y="247" width="37" height="11" fill="#c80000" />
      <text className="end" x="40" y="253" fill="#fff">-25%</text>

      <rect x="3.500" y="305.500" width="700" height="152" rx="4" fill="#e7f0f8" stroke="#8595a6" />
      {greekRows.map((row) => (
        <g key={row.name}>
          <text x="25" y={row.base + 1} fill="#7c8796">{row.name}</text>
          <path d={`M46 ${row.base + 0.5}H600`} stroke="#6a7078" />
          {row.bars.map((h, i) => {
            const left = i === 0 ? 46 : px(130 + i * 20);
            const neg = row.text[i].startsWith("-");
            const color = neg ? "#f0504f" : "#5460f0";
            return (
              <g key={i}>
                {h !== 0 && (
                  <rect x={left} y={row.base + 0.5 - Math.max(h, 0)} width={px(150 + i * 20) - left} height={Math.abs(h)}
                    fill={h < 0 ? "#f3787b" : "#5a7cff"} stroke="#606a80" strokeWidth=".8" />
                )}
                <GreekValue x={px(140 + i * 20)} y={neg ? row.negY : row.posY} fill={color}>{row.text[i]}</GreekValue>
                {row.sub && <GreekValue x={px(140 + i * 20)} y={neg ? 315 : 342} fill={color}>{row.sub[i]}</GreekValue>}
              </g>
            );
          })}
        </g>
      ))}
      <rect x="346.500" y="292.500" width="40" height="165" rx="4" fill="#eaf1f9" fillOpacity=".88" stroke="#6f7f90" strokeWidth="1.300" />
      <text x="366.500" y="298">316.97</text>
      <g fill="#f01818">
        <text x="366.500" y="325">-357</text>
        <text x="366.500" y="338">-24.6%</text>
        <text x="366.500" y="364">-0.94</text>
        <text x="366.500" y="417">-4.23</text>
      </g>
      <g fill="#1a1af0">
        <text x="366.500" y="391">0.21</text>
        <text x="366.500" y="444">89.74</text>
      </g>
    </ChartSvg>
  );
}

const legs = [
  ["-1", " 21jun. 600 Call Δ", "4.67", "#f25a5a", "#66d666"],
  ["+3", " 21jun. 170 Put Δ", "-4.24", "#5a5af0", "#7aa3e0"],
  ["+3", " 21jun. 600 Call Δ", "4.67", "#5a5af0", "#7aa3e0"],
  ["-2", " 16feb. 600 Call Δ", "1.17", "#f25a5a", "#7aa3e0"],
  ["-2", " 16feb. 170 Put Δ", "-2.39", "#f25a5a", "#7aa3e0"],
];
const dates = [
  ["21/06/2024 (0)", "#4a954a"],
  ["03/05/2024 (49) T+196", "#f08cf0"],
  ["15/03/2024 (98) T+147", "#aeae58"],
  ["26/01/2024 (147) T+98", "#a0a0a0"],
  ["08/12/2023 (196) T+49", "#f25a5a"],
  ["20/10/2023 (245) T+0", "#84dc84"],
];

export default function App() {
  return (
    <Shell>
      <Global />
      <Backdrop />
      <TitleBar>OptionNET Explorer</TitleBar>
      <MenuBar>
        <button>on</button>
        <button>Tools</button>
        <button>Support</button>
        <MenuEnd>
          <button aria-label="Collapse ribbon"><Chevron up /></button>
          <button aria-label="Help">
            <svg width="9" height="12" viewBox="0 0 9 12" fill="none">
              <path d="M1.500 4c0-3.500 6-3.500 6 0 0 2-3 2-3 4" stroke="#5d9bd3" strokeWidth="2.200" />
              <circle cx="4.500" cy="10.600" r="1.300" fill="#4486c6" />
            </svg>
          </button>
        </MenuEnd>
      </MenuBar>

      <Ribbon>
        <Group $w={58} $shift={5}>
          <BigButtons><BigButton><ReportsIcon />Reports</BigButton></BigButtons>
          <Caption>Reports</Caption>
        </Group>
        <Group $w={133}>
          <BigButtons>
            <BigButton><LogIcon />Trade Log</BigButton>
            <BigButton><LogIcon plus />Commit Trade</BigButton>
          </BigButtons>
          <Caption>Trade Log</Caption>
        </Group>
        <Group $w={226}>
          <DateField>
            <input aria-label="Trading date" defaultValue="vi. 20 oct. 2023" />
            <DateButton aria-label="Calendar"><CalendarIcon /></DateButton>
            <DateButton aria-label="Swap"><SwapIcon /></DateButton>
            <DateButton>Exp</DateButton>
            <DateButton disabled>LIVE</DateButton>
          </DateField>
          <Steps>
            <Step aria-label="Back"><DoubleChevron /></Step>
            <Step disabled>5m-</Step>
            <Step disabled>45m-</Step>
            <Step>Day-</Step>
            <Step disabled>Day+</Step>
            <Step disabled>45m+</Step>
            <Step disabled>5m+</Step>
            <Step aria-label="Forward"><DoubleChevron right /></Step>
          </Steps>
          <Caption>Trading Date &amp; Time</Caption>
        </Group>
        <Group $w={377}>
          <Commands>
            <Command>{icons.watchlist}Watchlist</Command>
            <Command>{icons.risk}Risk Chart</Command>
            <Command>{icons.chain}Option Chain</Command>
            <Command>{icons.grid}Monitor Grid</Command>
            <Command disabled>{icons.earnings}Earnings</Command>
            <Command>{icons.analysis}Analysis</Command>
            <Command>{icons.price}Price Chart</Command>
            <Command disabled>{icons.orders}Orders</Command>
            <Command>{icons.dock}Monitor Dock</Command>
            <Command>{icons.rss}RSS Feed</Command>
          </Commands>
          <Caption>Windows</Caption>
          <Launcher aria-label="Windows options">
            <svg width="6" height="6" viewBox="0 0 6 6" fill="none" stroke="#888"><path d="M.5 5V.5H5M2.500 2.500L5 5M5.500 2.500v3h-3" /></svg>
          </Launcher>
        </Group>
        <Group $w={147}>
          <Playback>
            <BigButton disabled><PlayIcon />Play</BigButton>
            <PlayOptions>
              <Field>Interval
                <SelectBox $w={41}><select><option>15m</option></select><span><Chevron /></span></SelectBox>
              </Field>
              <Field>Speed
                <svg width="8" height="8" viewBox="0 0 8 8"><path d="M2 4h5" stroke="#666" strokeWidth="1.600" /></svg>
                <SpeedRange type="range" />
                <svg width="8" height="8" viewBox="0 0 8 8"><path d="M4 1v6M1 4h6" stroke="#666" strokeWidth="2.200" /></svg>
              </Field>
            </PlayOptions>
          </Playback>
          <Caption>Playback</Caption>
        </Group>
        <Brand>
          <AtomLogo />
          <span>v2.</span>
        </Brand>
      </Ribbon>
      <AccountBar>Account: Gamm</AccountBar>

      <Workspace>
        <LeftPane>
          <LeftStack>
            <Toolbar $h={25}>
              <ComboEdge />
              <label htmlFor="strategy">Open Position (1)</label>
              <SelectBox $w={140}><select id="strategy"><option>#19 Custom</option></select><span><Chevron /></span></SelectBox>
              <Spring />
              <IconButton><CommitIcon />Commit</IconButton>
              <IconButton $gap={12} aria-label="Search"><SearchIcon /></IconButton>
              <IconButton aria-label="Columns"><ColumnsIcon /></IconButton>
              <IconButton aria-label="Delete"><CloseIcon /></IconButton>
              <IconButton $gap={12} aria-label="Settings"><GearIcon /></IconButton>
            </Toolbar>
            <SummaryRow>
              <Frame $open $grow={297}>
                <Table>
                  <Cols widths={[15, 45, 33, 33, 34, 33, 33, 33, 37]} />
                  <thead><tr><EdgeHead>w</EdgeHead>{["Last", "Chg", "Chg%", "IV", "IV ...", "SD", "Model", "Positi..."].map((h) => <th key={h}>{h}</th>)}</tr></thead>
                  <tbody>
                    <tr>
                      <Cell $color={c.text} $tight>.56</Cell><Cell $color={g}>316.97</Cell><Cell $color={g}>0.00</Cell><Cell $color={c.text}>0.00...</Cell>
                      <Cell $color={c.text}>61.38</Cell><Cell $color={c.text}>-15%</Cell><td>0.00</td><td /><td />
                    </tr>
                  </tbody>
                </Table>
              </Frame>
              <Frame $grow={202}>
                <Table>
                  <thead><tr>{["DIT", "SD", "IVCh...", "Curr...", "PnL%"].map((h) => <th key={h}>{h}</th>)}</tr></thead>
                  <tbody><tr>{["148", "1.22", "74.72%", "1,453...", "-24.57..."].map((v) => <Cell key={v} $color={c.text}>{v}</Cell>)}</tr></tbody>
                </Table>
              </Frame>
            </SummaryRow>
            <GripRow />
            <Frame $open>
              <ChainTitle><span>21 jun. 24 (245)</span>41.24%</ChainTitle>
              <Chain rows={calls} height={186} fill={186} before={3} after={123} />
            </Frame>
            <GripRow />
            <Frame $open>
              <Chain rows={puts} height={159} fill={171} tinted before={81} after={18} />
            </Frame>
            <GripRow />
            <Toolbar $h={21}>
              <SelectBox $w={104} $open><select aria-label="Grouping"><option>nbined</option></select><span><Chevron /></span></SelectBox>
              <SelectBox $w={67}><select aria-label="Filter"><option>All</option></select><span><Chevron /></span></SelectBox>
              <Spring />
              <CheckLabel><Check type="checkbox" />Ignore Today's Trades</CheckLabel>
            </Toolbar>
            <Frame $open>
              <PositionTable>
                <Cols widths={[44, 46, 46, 45, 46, 46, 46, 46, 46, 46, 46]} />
                <thead><tr>{["Cost", "Curr C...", "Commi...", "PnL", "PnL%", "Delta", "Gamma", "Theta", "Vega", "T/D", "Plot"].map((h) => <th key={h}>{h}</th>)}</tr></thead>
                <tbody>
                  {positions.map((row) => (
                    <tr key={row[0]}>
                      {row.map((v, i) => (
                        <Cell key={i} $color={i === 3 || i === 4 ? "#f01010" : i === 7 ? "#8c1010" : undefined} $bg={i === 7 ? "#fe0000" : undefined}>{v}</Cell>
                      ))}
                      <td><Check type="checkbox" defaultChecked aria-label="Plot" /></td>
                    </tr>
                  ))}
                </tbody>
              </PositionTable>
            </Frame>
          </LeftStack>
          <GripRow $vertical />
        </LeftPane>

        <ChartPane>
          <Tabs role="tablist">
            <Tab role="tab" $active>Risk Chart</Tab>
            <Tab role="tab">Price Chart</Tab>
            <Tab role="tab">Movement Analysis</Tab>
            <Tab role="tab">Volatility</Tab>
            <Tab role="tab">Statistics &amp; Fundamentals</Tab>
          </Tabs>
          <ChartOptions>
            <label htmlFor="vol">Vol Adjust</label>
            <Spinner>
              <input id="vol" defaultValue="0" />
              <span><Chevron up /><Chevron /></span>
            </Spinner>
            <Spring />
            <label htmlFor="projection">Projection</label>
            <Projection id="projection" defaultValue="20/10/2023" />
          </ChartOptions>
          <ChartArea>
            <RiskChart />
            <LegendBox $top={20} $w={128} $pad="6px 6px 5px 6px">
              <LegendRow $color="#555" $bar="#a4eaa4">1,454.30 Realized PnL</LegendRow>
              {legs.map(([qty, name, delta, color, bar], i) => (
                <LegendRow key={i} $color={color} $bar={bar}><b>{qty}</b>{name}<i>{delta}</i></LegendRow>
              ))}
            </LegendBox>
            <LegendBox $top={204} $w={99} $pad="7px 5px 6px 5px">
              {dates.map(([d, color]) => <LegendRow key={d} $color={color}>{d}</LegendRow>)}
            </LegendBox>
            <ProbabilityMark>13.6%</ProbabilityMark>
          </ChartArea>
          <StatusBar>
            29%
            <svg width="21" height="9" viewBox="0 0 21 9" stroke="#d8d8d8"><path d="M0 4.500h5M10.500 1v7M13 4.500h8" /></svg>
          </StatusBar>
        </ChartPane>
      </Workspace>
      <WindowEdge />
    </Shell>
  );
}
